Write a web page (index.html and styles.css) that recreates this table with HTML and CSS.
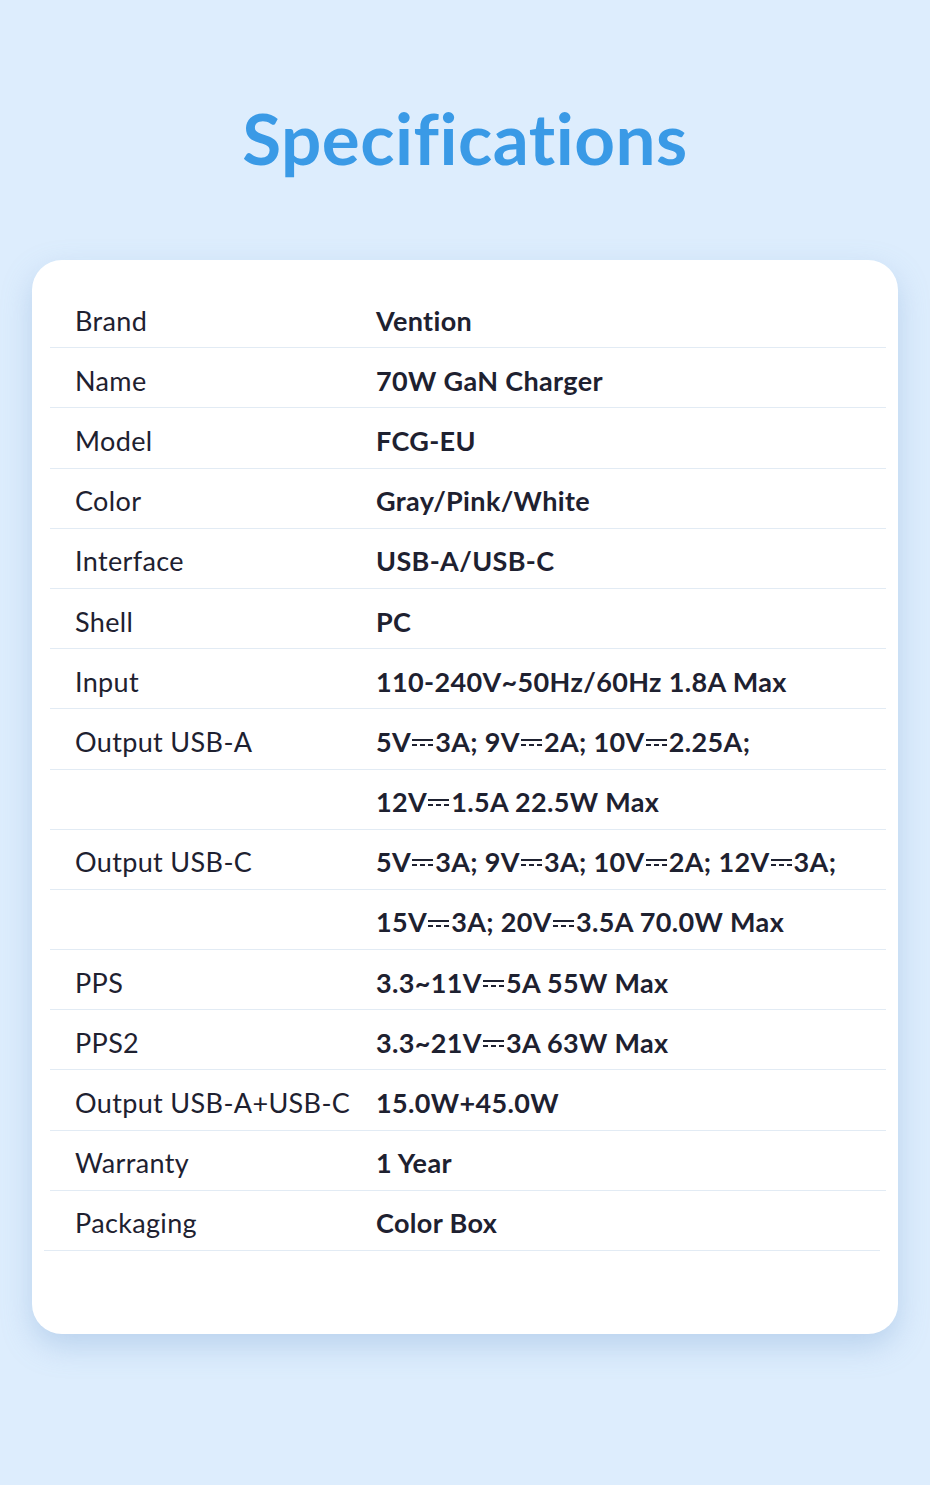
FILE: index.html
```html
<!DOCTYPE html>
<html lang="en">
<head>
<meta charset="utf-8">
<title>Specifications</title>
<link rel="stylesheet" href="styles.css">
</head>
<body>
<main class="page">
  <h1 class="title">Specifications</h1>
  <section class="card">
    <div class="row"><div class="label">Brand</div><div class="value">Vention</div></div>
    <div class="row"><div class="label">Name</div><div class="value">70W GaN Charger</div></div>
    <div class="row"><div class="label">Model</div><div class="value">FCG-EU</div></div>
    <div class="row"><div class="label">Color</div><div class="value">Gray/Pink/White</div></div>
    <div class="row"><div class="label">Interface</div><div class="value">USB-A/USB-C</div></div>
    <div class="row"><div class="label">Shell</div><div class="value">PC</div></div>
    <div class="row"><div class="label">Input</div><div class="value">110-240V~50Hz/60Hz 1.8A Max</div></div>
    <div class="row"><div class="label">Output USB-A</div><div class="value">5V<span class="dc"></span>3A; 9V<span class="dc"></span>2A; 10V<span class="dc"></span>2.25A;</div></div>
    <div class="row"><div class="label"></div><div class="value">12V<span class="dc"></span>1.5A 22.5W Max</div></div>
    <div class="row"><div class="label">Output USB-C</div><div class="value">5V<span class="dc"></span>3A; 9V<span class="dc"></span>3A; 10V<span class="dc"></span>2A; 12V<span class="dc"></span>3A;</div></div>
    <div class="row"><div class="label"></div><div class="value">15V<span class="dc"></span>3A; 20V<span class="dc"></span>3.5A 70.0W Max</div></div>
    <div class="row"><div class="label">PPS</div><div class="value">3.3~11V<span class="dc"></span>5A 55W Max</div></div>
    <div class="row"><div class="label">PPS2</div><div class="value">3.3~21V<span class="dc"></span>3A 63W Max</div></div>
    <div class="row"><div class="label">Output USB-A+USB-C</div><div class="value">15.0W+45.0W</div></div>
    <div class="row"><div class="label">Warranty</div><div class="value">1 Year</div></div>
    <div class="row row-last"><div class="label">Packaging</div><div class="value">Color Box</div></div>
  </section>
</main>
</body>
</html>
```
FILE: styles.css
```css
html, body {
  margin: 0;
  padding: 0;
}
body {
  background: #ddedfd;
  font-family: "Lato", "Noto Sans", sans-serif;
  color: #1e2130;
  width: 930px;
  height: 1485px;
  overflow: hidden;
}
.page {
  display: flex;
  flex-direction: column;
  align-items: center;
}
.title {
  margin: 96px 0 0;
  height: 164px;
  font-size: 71px;
  font-weight: 700;
  color: #3a9ae6;
  line-height: 84px;
  font-variant-ligatures: none;
  letter-spacing: 0.5px;
}
.card {
  width: 866px;
  box-sizing: border-box;
  background: #fff;
  border-radius: 30px;
  padding: 28px 12px 83px 18px;
  box-shadow: 0 12px 30px rgba(120, 160, 210, 0.35);
  display: flex;
  flex-direction: column;
}
.row {
  height: 60.2px;
  box-sizing: border-box;
  padding-top: 5px;
  border-bottom: 1px solid #e2ebf4;
  display: flex;
  align-items: center;
  font-size: 27px;
  letter-spacing: 0.35px;
}
.row-last {
  margin-left: -6px;
  margin-right: 6px;
}
.label {
  width: 326px;
  flex: none;
  padding-left: 25px;
  box-sizing: border-box;
  font-weight: 400;
  white-space: nowrap;
}
.row-last .label {
  padding-left: 31px;
}
.row-last .value {
  padding-left: 6px;
}
.value {
  font-weight: 700;
  white-space: nowrap;
}
.dc {
  display: inline-block;
  width: 21px;
  height: 7px;
  margin: 0 2px 0 1px;
  vertical-align: 0.22em;
  box-sizing: border-box;
  border-top: 2px solid currentColor;
  background: repeating-linear-gradient(90deg, currentColor 0 5px, transparent 5px 8px) left bottom / 100% 2px no-repeat;
}
```
